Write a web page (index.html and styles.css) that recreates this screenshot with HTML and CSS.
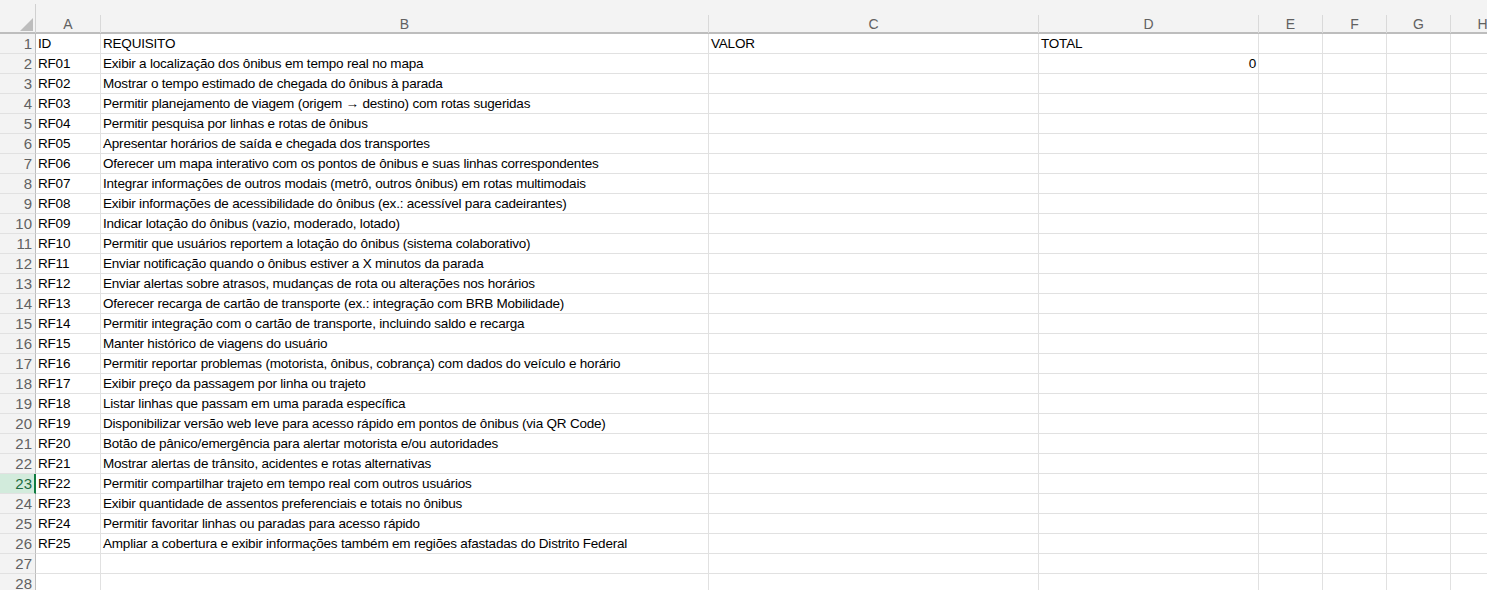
FILE: index.html
```html
<!DOCTYPE html>
<html lang="pt-BR">
<head>
<meta charset="utf-8">
<title>Requisitos</title>
<link rel="stylesheet" href="styles.css">
</head>
<body>
<div class="sheet">
  <div class="colhead">
    <div class="corner"><span class="tri"></span></div>
    <div class="ch">A</div><div class="ch">B</div><div class="ch">C</div><div class="ch">D</div><div class="ch">E</div><div class="ch">F</div><div class="ch">G</div><div class="ch">H</div>
  </div>
  <div class="row"><div class="rh">1</div><div class="c">ID</div><div class="c">REQUISITO</div><div class="c">VALOR</div><div class="c">TOTAL</div><div class="c"></div><div class="c"></div><div class="c"></div><div class="c"></div></div>
  <div class="row"><div class="rh">2</div><div class="c">RF01</div><div class="c">Exibir a localização dos ônibus em tempo real no mapa</div><div class="c"></div><div class="c num">0</div><div class="c"></div><div class="c"></div><div class="c"></div><div class="c"></div></div>
  <div class="row"><div class="rh">3</div><div class="c">RF02</div><div class="c">Mostrar o tempo estimado de chegada do ônibus à parada</div><div class="c"></div><div class="c"></div><div class="c"></div><div class="c"></div><div class="c"></div><div class="c"></div></div>
  <div class="row"><div class="rh">4</div><div class="c">RF03</div><div class="c">Permitir planejamento de viagem (origem → destino) com rotas sugeridas</div><div class="c"></div><div class="c"></div><div class="c"></div><div class="c"></div><div class="c"></div><div class="c"></div></div>
  <div class="row"><div class="rh">5</div><div class="c">RF04</div><div class="c">Permitir pesquisa por linhas e rotas de ônibus</div><div class="c"></div><div class="c"></div><div class="c"></div><div class="c"></div><div class="c"></div><div class="c"></div></div>
  <div class="row"><div class="rh">6</div><div class="c">RF05</div><div class="c">Apresentar horários de saída e chegada dos transportes</div><div class="c"></div><div class="c"></div><div class="c"></div><div class="c"></div><div class="c"></div><div class="c"></div></div>
  <div class="row"><div class="rh">7</div><div class="c">RF06</div><div class="c">Oferecer um mapa interativo com os pontos de ônibus e suas linhas correspondentes</div><div class="c"></div><div class="c"></div><div class="c"></div><div class="c"></div><div class="c"></div><div class="c"></div></div>
  <div class="row"><div class="rh">8</div><div class="c">RF07</div><div class="c">Integrar informações de outros modais (metrô, outros ônibus) em rotas multimodais</div><div class="c"></div><div class="c"></div><div class="c"></div><div class="c"></div><div class="c"></div><div class="c"></div></div>
  <div class="row"><div class="rh">9</div><div class="c">RF08</div><div class="c">Exibir informações de acessibilidade do ônibus (ex.: acessível para cadeirantes)</div><div class="c"></div><div class="c"></div><div class="c"></div><div class="c"></div><div class="c"></div><div class="c"></div></div>
  <div class="row"><div class="rh">10</div><div class="c">RF09</div><div class="c">Indicar lotação do ônibus (vazio, moderado, lotado)</div><div class="c"></div><div class="c"></div><div class="c"></div><div class="c"></div><div class="c"></div><div class="c"></div></div>
  <div class="row"><div class="rh">11</div><div class="c">RF10</div><div class="c">Permitir que usuários reportem a lotação do ônibus (sistema colaborativo)</div><div class="c"></div><div class="c"></div><div class="c"></div><div class="c"></div><div class="c"></div><div class="c"></div></div>
  <div class="row"><div class="rh">12</div><div class="c">RF11</div><div class="c">Enviar notificação quando o ônibus estiver a X minutos da parada</div><div class="c"></div><div class="c"></div><div class="c"></div><div class="c"></div><div class="c"></div><div class="c"></div></div>
  <div class="row"><div class="rh">13</div><div class="c">RF12</div><div class="c">Enviar alertas sobre atrasos, mudanças de rota ou alterações nos horários</div><div class="c"></div><div class="c"></div><div class="c"></div><div class="c"></div><div class="c"></div><div class="c"></div></div>
  <div class="row"><div class="rh">14</div><div class="c">RF13</div><div class="c">Oferecer recarga de cartão de transporte (ex.: integração com BRB Mobilidade)</div><div class="c"></div><div class="c"></div><div class="c"></div><div class="c"></div><div class="c"></div><div class="c"></div></div>
  <div class="row"><div class="rh">15</div><div class="c">RF14</div><div class="c">Permitir integração com o cartão de transporte, incluindo saldo e recarga</div><div class="c"></div><div class="c"></div><div class="c"></div><div class="c"></div><div class="c"></div><div class="c"></div></div>
  <div class="row"><div class="rh">16</div><div class="c">RF15</div><div class="c">Manter histórico de viagens do usuário</div><div class="c"></div><div class="c"></div><div class="c"></div><div class="c"></div><div class="c"></div><div class="c"></div></div>
  <div class="row"><div class="rh">17</div><div class="c">RF16</div><div class="c">Permitir reportar problemas (motorista, ônibus, cobrança) com dados do veículo e horário</div><div class="c"></div><div class="c"></div><div class="c"></div><div class="c"></div><div class="c"></div><div class="c"></div></div>
  <div class="row"><div class="rh">18</div><div class="c">RF17</div><div class="c">Exibir preço da passagem por linha ou trajeto</div><div class="c"></div><div class="c"></div><div class="c"></div><div class="c"></div><div class="c"></div><div class="c"></div></div>
  <div class="row"><div class="rh">19</div><div class="c">RF18</div><div class="c">Listar linhas que passam em uma parada específica</div><div class="c"></div><div class="c"></div><div class="c"></div><div class="c"></div><div class="c"></div><div class="c"></div></div>
  <div class="row"><div class="rh">20</div><div class="c">RF19</div><div class="c">Disponibilizar versão web leve para acesso rápido em pontos de ônibus (via QR Code)</div><div class="c"></div><div class="c"></div><div class="c"></div><div class="c"></div><div class="c"></div><div class="c"></div></div>
  <div class="row"><div class="rh">21</div><div class="c">RF20</div><div class="c">Botão de pânico/emergência para alertar motorista e/ou autoridades</div><div class="c"></div><div class="c"></div><div class="c"></div><div class="c"></div><div class="c"></div><div class="c"></div></div>
  <div class="row"><div class="rh">22</div><div class="c">RF21</div><div class="c">Mostrar alertas de trânsito, acidentes e rotas alternativas</div><div class="c"></div><div class="c"></div><div class="c"></div><div class="c"></div><div class="c"></div><div class="c"></div></div>
  <div class="row"><div class="rh active">23</div><div class="c">RF22</div><div class="c">Permitir compartilhar trajeto em tempo real com outros usuários</div><div class="c"></div><div class="c"></div><div class="c"></div><div class="c"></div><div class="c"></div><div class="c"></div></div>
  <div class="row"><div class="rh">24</div><div class="c">RF23</div><div class="c">Exibir quantidade de assentos preferenciais e totais no ônibus</div><div class="c"></div><div class="c"></div><div class="c"></div><div class="c"></div><div class="c"></div><div class="c"></div></div>
  <div class="row"><div class="rh">25</div><div class="c">RF24</div><div class="c">Permitir favoritar linhas ou paradas para acesso rápido</div><div class="c"></div><div class="c"></div><div class="c"></div><div class="c"></div><div class="c"></div><div class="c"></div></div>
  <div class="row"><div class="rh">26</div><div class="c">RF25</div><div class="c">Ampliar a cobertura e exibir informações também em regiões afastadas do Distrito Federal</div><div class="c"></div><div class="c"></div><div class="c"></div><div class="c"></div><div class="c"></div><div class="c"></div></div>
  <div class="row"><div class="rh">27</div><div class="c"></div><div class="c"></div><div class="c"></div><div class="c"></div><div class="c"></div><div class="c"></div><div class="c"></div><div class="c"></div></div>
  <div class="row"><div class="rh">28</div><div class="c"></div><div class="c"></div><div class="c"></div><div class="c"></div><div class="c"></div><div class="c"></div><div class="c"></div><div class="c"></div></div>
</div>
</body>
</html>
```
FILE: styles.css
```css
* { box-sizing: border-box; }
html, body { margin: 0; padding: 0; background: #ffffff; overflow: hidden; }
body {
  font-family: "Liberation Sans", Arial, sans-serif;
  font-size: 13.5px;
  letter-spacing: -0.2px;
  color: #000000;
}
.sheet { width: 1487px; height: 590px; overflow: hidden; }
.colhead, .row {
  display: grid;
  width: 1515px;
  grid-template-columns: 36px 65px 608px 330px 220px 64px 64px 64px 64px;
}
.colhead {
  height: 34px;
  background: #f3f3f3;
  border-bottom: 2px solid #bdbdbd;
}
.corner {
  position: relative;
  border-right: 1px solid #d0d0d0;
  margin-top: 4px;
}
.tri {
  position: absolute;
  right: 2px;
  bottom: 2px;
  width: 0;
  height: 0;
  border-style: solid;
  border-width: 0 0 13px 13px;
  border-color: transparent transparent #bdbdbd transparent;
}
.ch {
  margin-top: 15px;
  border-right: 1px solid #d9d9d9;
  color: #616161;
  text-align: center;
  line-height: 18px;
  font-size: 14px;
  letter-spacing: 0;
}
.row { height: 20px; }
.rh {
  background: #f3f3f3;
  color: #616161;
  text-align: right;
  padding-right: 3px;
  padding-top: 1px;
  border-right: 1px solid #bdbdbd;
  border-bottom: 1px solid #e1e1e1;
  line-height: 18px;
  font-size: 15px;
  letter-spacing: 0;
}
.rh.active {
  background: #d2ebdc;
  color: #1e6b3f;
  border-right: 2px solid #107c41;
  padding-right: 2px;
}
.c {
  border-right: 1px solid #e1e1e1;
  border-bottom: 1px solid #e1e1e1;
  padding: 1px 2px 0;
  line-height: 18px;
  white-space: nowrap;
  overflow: visible;
}
.c.num { text-align: right; }
```
